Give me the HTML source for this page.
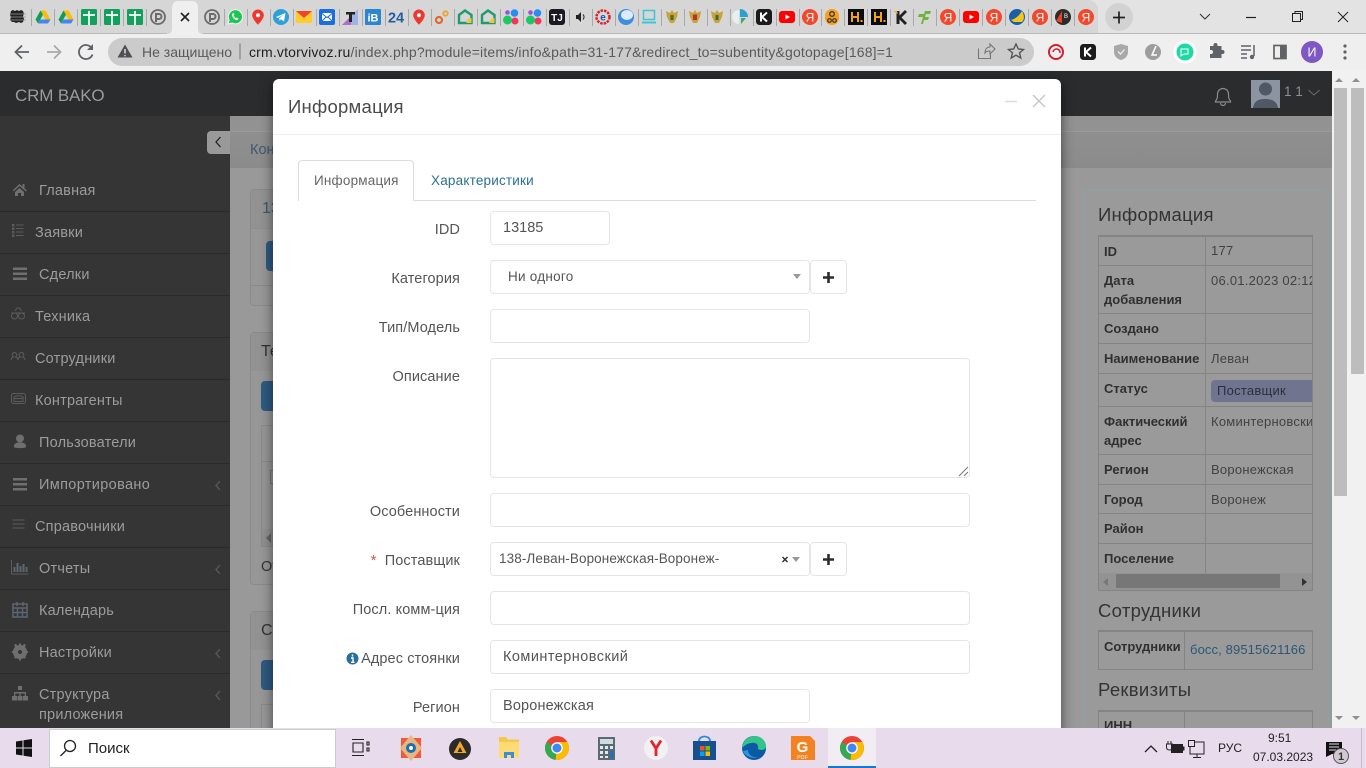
<!DOCTYPE html>
<html lang="ru"><head><meta charset="utf-8"><title>CRM BAKO</title>
<style>
html,body{margin:0;padding:0;width:1366px;height:768px;overflow:hidden;background:#999;font-family:"Liberation Sans","Noto Sans CJK SC",sans-serif}
div,span,a{position:absolute;box-sizing:border-box}
.t{white-space:nowrap;line-height:20px;height:20px}
.s{font-size:14.5px;color:#9c9c9c;letter-spacing:.2px;left:39px}
.s.n{left:35px}
.l{font-size:14.5px;color:#555;text-align:right;right:906px;letter-spacing:.1px}
.i{left:490px;height:34px;background:#fff;border:1px solid #e5e5e5;border-radius:4px;font-size:14.5px;color:#555;line-height:33px;padding-left:12px;letter-spacing:.25px;white-space:nowrap}
.p{left:810px;width:37px;height:34px;background:#fff;border:1px solid #e5e5e5;border-radius:4px}
.k{font-size:13px;font-weight:bold;color:#303030;left:5px;letter-spacing:0}
.v{font-size:13px;color:#424242;left:112px;letter-spacing:.25px}
.h{height:1px;left:0;width:215px;background:#848484}
.sep{left:0;width:230px;height:1px;background:#2b2b2b}
svg{position:absolute;display:block}
</style></head><body>

<svg width="0" height="0" style="position:absolute">
<defs>
<symbol id="drive" viewBox="0 0 16 16"><path d="M5.500 1.500h5L15.500 10.500h-5z" fill="#fbbc04"/><path d="M5.500 1.500L.5 10.500 3 14.500 8 5.800z" fill="#0f9d58"/><path d="M3 14.500h10l2.500-4H5.500z" fill="#4285f4"/></symbol>
<symbol id="sheet" viewBox="0 0 16 16"><rect width="16" height="16" rx="1.500" fill="#12a05c"/><path d="M2 6h12M8 2v14" stroke="#fff" stroke-width="1.700" fill="none"/></symbol>
<symbol id="pp" viewBox="0 0 16 16"><circle cx="8" cy="8" r="7" fill="none" stroke="#6b6b6b" stroke-width="1.800"/><path d="M6 13V5h3a2.300 2.300 0 010 5H6" fill="none" stroke="#6b6b6b" stroke-width="2"/></symbol>
<symbol id="wa" viewBox="0 0 16 16"><path d="M1 15l1.200-4A7 7 0 115 13.900z" fill="#1fc655" stroke="#fff" stroke-width=".8"/><path d="M5.500 4.500c-1.500 2 1.500 7 5 6.500l1-1.500-2-1-.8.800C7.500 8 7 7.300 6.700 6.300l.7-.8-.8-1.500z" fill="#fff"/></symbol>
<symbol id="pin" viewBox="0 0 16 16"><path d="M8 .5a5.800 5.800 0 00-5.800 5.800C2.200 10 8 15.800 8 15.800s5.800-5.800 5.800-9.500A5.800 5.800 0 008 .5z" fill="#f0372e"/><circle cx="8" cy="6.300" r="2" fill="#fff"/></symbol>
<symbol id="tg" viewBox="0 0 16 16"><circle cx="8" cy="8" r="8" fill="#2f9fd8"/><path d="M3 8l9.500-4-1.500 8.500-3-2.200-1.500 1.400-.3-2.500 4.300-3.700L5 9z" fill="#fff"/></symbol>
<symbol id="ym" viewBox="0 0 16 16"><rect y="2" width="16" height="12" fill="#ffcc2b"/><path d="M0 2l8 7 8-7z" fill="#f0442c"/></symbol>
<symbol id="bm" viewBox="0 0 16 16"><rect width="16" height="16" rx="2" fill="#1a6fe0"/><rect x="3" y="4" width="10" height="8" rx="2" fill="#fff"/><path d="M3.500 5L8 8.500 12.500 5M3.500 11.500L7 8M12.500 11.500L9 8" stroke="#1a6fe0" fill="none"/></symbol>
<symbol id="tt" viewBox="0 0 16 16"><path d="M0 16L16 0v16z" fill="#9fb4e2"/><path d="M0 16L9 7v9z" fill="#b06cc8"/><path d="M4 3h9v2.500H10V13H7V5.500H4z" fill="#222"/></symbol>
<symbol id="ib" viewBox="0 0 16 16"><rect width="16" height="16" rx="1" fill="#2a86cf"/><text x="8" y="12.500" font-size="11" fill="#fff" font-weight="bold" text-anchor="middle" font-family="Liberation Sans">iB</text></symbol>
<symbol id="n24" viewBox="0 0 16 16"><text x="8" y="13.500" font-size="14.500" fill="#215f9c" font-weight="bold" text-anchor="middle" font-family="Liberation Sans">24</text></symbol>
<symbol id="gear" viewBox="0 0 16 16"><circle cx="5" cy="11" r="3" fill="none" stroke="#e0682a" stroke-width="2.200"/><circle cx="11.500" cy="4.500" r="2.200" fill="none" stroke="#f2a12c" stroke-width="1.800"/></symbol>
<symbol id="hs" viewBox="0 0 16 16"><path d="M8 1.500L14.500 6v8H2V6z" fill="none" stroke="#1f9a6f" stroke-width="2.400"/><path d="M11 10l3.500-1v5H9z" fill="#f5c33b"/></symbol>
<symbol id="dots" viewBox="0 0 16 16"><circle cx="4.500" cy="11" r="4.500" fill="#18c964"/><circle cx="11.500" cy="4" r="3.800" fill="#2a8bf2"/><circle cx="12" cy="12" r="3.500" fill="#f2355b"/><circle cx="4.500" cy="3.500" r="2.300" fill="#9b51e0"/></symbol>
<symbol id="ti" viewBox="0 0 16 16"><rect width="16" height="16" rx="3" fill="#1a1a22"/><text x="8" y="12" font-size="10" fill="#fff" font-weight="bold" text-anchor="middle" font-family="Liberation Sans">TJ</text></symbol>
<symbol id="spk" viewBox="0 0 16 16"><path d="M4 6h2l3-3v10L6 10H4z" fill="#222"/><path d="M11 5.500a3.500 3.500 0 010 5" stroke="#222" fill="none"/></symbol>
<symbol id="ee" viewBox="0 0 16 16"><circle cx="8" cy="8" r="6.500" fill="none" stroke="#d8232a" stroke-width="2.500" stroke-dasharray="2.500 1"/><text x="8" y="11.500" font-size="10" font-weight="bold" fill="#1b57b5" text-anchor="middle" font-family="Liberation Sans">e</text></symbol>
<symbol id="ball" viewBox="0 0 16 16"><circle cx="8" cy="8" r="8" fill="#3f8de0"/><ellipse cx="9" cy="6" rx="6" ry="5" fill="#dcecff"/></symbol>
<symbol id="mon" viewBox="0 0 16 16"><rect x="2.500" y="1.500" width="11" height="9" fill="none" stroke="#3cc5d8" stroke-width="1.500"/><path d="M1 13.500h14" stroke="#3cc5d8" stroke-width="2"/></symbol>
<symbol id="emb" viewBox="0 0 16 16"><path d="M8 1l2 3 4-2-1 6-3 6H6L3 8 2 2l4 2z" fill="#c9a33a"/><path d="M6.500 6h3v5h-3z" fill="#3a6a3a"/></symbol>
<symbol id="emr" viewBox="0 0 16 16"><path d="M8 1l2 3 4-2-1 6-3 6H6L3 8 2 2l4 2z" fill="#c9a33a"/><path d="M6 5.500h4v5.500H6z" fill="#b6322a"/></symbol>
<symbol id="pie" viewBox="0 0 16 16"><path d="M8 0a8 8 0 018 8H8z" fill="#2e9fd0"/><path d="M7 1v14A7 7 0 017 1z" fill="#e6f0f0"/><path d="M9 9h5l-5 6z" fill="#3fa96b"/></symbol>
<symbol id="kk" viewBox="0 0 16 16"><rect width="16" height="16" rx="3.500" fill="#1b1b1b"/><path d="M5 3.500v9M11 3.500L6 8l5 4.500" stroke="#fff" stroke-width="2" fill="none"/></symbol>
<symbol id="yt" viewBox="0 0 16 16"><rect y="2" width="16" height="12" rx="3" fill="#f00"/><path d="M6.500 5.500L11 8l-4.500 2.500z" fill="#fff"/></symbol>
<symbol id="ya" viewBox="0 0 16 16"><circle cx="8" cy="8" r="8" fill="#f4472b"/><text x="8" y="12.500" font-size="12" fill="#fff" text-anchor="middle" font-family="Liberation Sans">Я</text></symbol>
<symbol id="ok" viewBox="0 0 16 16"><rect x="1" width="14" height="16" rx="7" fill="#f7a01d"/><circle cx="8" cy="5" r="2.300" fill="none" stroke="#333" stroke-width="1.300"/><circle cx="5.500" cy="11.500" r="1.800" fill="none" stroke="#333" stroke-width="1.200"/><circle cx="10.500" cy="11.500" r="1.800" fill="none" stroke="#333" stroke-width="1.200"/></symbol>
<symbol id="hh" viewBox="0 0 16 16"><rect width="16" height="16" fill="#0c0c0c"/><path d="M4 3v10M10 3v10M4 8h6" stroke="#f2a11f" stroke-width="2"/><rect x="12.500" y="11" width="2" height="2" fill="#f2a11f"/></symbol>
<symbol id="kc" viewBox="0 0 16 16"><path d="M5 2v13" stroke="#222" stroke-width="3"/><path d="M13 2L6.500 8.500 13 15" stroke="#222" stroke-width="2.800" fill="none"/><path d="M0 2h4l1 3z" fill="#f2b01f"/></symbol>
<symbol id="ff" viewBox="0 0 16 16"><path d="M5 15l2-7H2l1-3h5l1-3h6l-1 3H10L9 8h4l-1 3H8l-1 4z" fill="#6fb23c"/></symbol>
<symbol id="ln" viewBox="0 0 16 16"><circle cx="8" cy="8" r="8" fill="#1b5faa"/><path d="M2 11c4-1 8-4 11-9 2 3 3 8 0 11H5z" fill="#f5c518"/></symbol>
<symbol id="ab" viewBox="0 0 16 16"><circle cx="8" cy="8" r="8" fill="#2c2c2c"/><path d="M1 12L7 2v12z" fill="#e6432c"/><text x="11" y="9" font-size="6" fill="#fff" text-anchor="middle" font-family="Liberation Sans">B</text></symbol>
<symbol id="cr" viewBox="0 0 24 24"><circle cx="12" cy="12" r="12" fill="#ea4335"/><path d="M12 12L1.600 6A12 12 0 000 12a12 12 0 0010.500 11.900z" fill="#34a853"/><path d="M12 6h10.400A12 12 0 0124 12a12 12 0 01-13.500 11.900L12 12z" fill="#fbbc04"/><circle cx="12" cy="12" r="5.800" fill="#fff"/><circle cx="12" cy="12" r="4.500" fill="#4285f4"/></symbol>
</defs>
</svg>

<!-- tab strip -->
<div style="left:0;top:0;width:1366px;height:35px;background:#e3e3e3"></div>
<div style="left:0;top:0;width:1098px;height:34px;background:#d6d6d6;border-radius:0 10px 0 0"></div>
<svg style="left:0;top:0" width="1366" height="35">
<g stroke="#a9a9a9" stroke-width="1">
<path d="M31.500 9v17M54.500 9v17M77.500 9v17M100.500 9v17M123.500 9v17M146.500 9v17M224.500 9v17M247.500 9v17M270.500 9v17M293.500 9v17M316.500 9v17M339.500 9v17M362.500 9v17M385.500 9v17M408.500 9v17M431.500 9v17M454.500 9v17M477.500 9v17M500.500 9v17M523.500 9v17M546.500 9v17M569.500 9v17M592.500 9v17M615.500 9v17M638.500 9v17M661.500 9v17M684.500 9v17M707.500 9v17M730.500 9v17M753.500 9v17M776.500 9v17M799.500 9v17M821.500 9v17M844.500 9v17M867.500 9v17M890.500 9v17M913.500 9v17M936.500 9v17M959.500 9v17M982.500 9v17M1005.500 9v17M1028.500 9v17M1051.500 9v17M1074.500 9v17"/>
</g>
<path d="M11 11l2-1 2 1 2-1 2 1 2-1 2 1 1 3-1 2 1 3-1 3-2 1-2-1-3 1-2-1-2 0-2-2 1-3-1-2z" fill="#222"/>
<path d="M10 14h16M10 17h16M10 20h16" stroke="#999" stroke-width=".7"/>
<use href="#drive" x="35" y="9" width="16" height="16"/><use href="#drive" x="58" y="9" width="16" height="16"/>
<use href="#sheet" x="81" y="9" width="16" height="16"/><use href="#sheet" x="104" y="9" width="16" height="16"/><use href="#sheet" x="127" y="9" width="16" height="16"/>
<use href="#pp" x="150" y="9" width="16" height="16"/>
<path d="M167 34c4 0 5-2 5-6V8c0-4 2-7 6-7h14c4 0 6 3 6 7v20c0 4 1 6 5 6z" fill="#efefef"/>
<path d="M181 13l8 8M189 13l-8 8" stroke="#222" stroke-width="1.600"/>
<use href="#pp" x="204" y="9" width="16" height="16"/><use href="#wa" x="227" y="9" width="16" height="16"/><use href="#pin" x="250" y="9" width="16" height="16"/><use href="#tg" x="273" y="9" width="16" height="16"/><use href="#ym" x="296" y="9" width="16" height="16"/><use href="#bm" x="319" y="9" width="16" height="16"/><use href="#tt" x="342" y="9" width="16" height="16"/><use href="#ib" x="365" y="9" width="16" height="16"/><use href="#n24" x="388" y="9" width="16" height="16"/><use href="#pin" x="411" y="9" width="16" height="16"/><use href="#gear" x="434" y="9" width="16" height="16"/><use href="#hs" x="457" y="9" width="16" height="16"/><use href="#hs" x="480" y="9" width="16" height="16"/><use href="#dots" x="503" y="9" width="16" height="16"/><use href="#dots" x="526" y="9" width="16" height="16"/><use href="#ti" x="549" y="9" width="16" height="16"/><use href="#spk" x="572" y="9" width="16" height="16"/><use href="#ee" x="595" y="9" width="16" height="16"/><use href="#ball" x="618" y="9" width="16" height="16"/><use href="#mon" x="641" y="9" width="16" height="16"/><use href="#emb" x="664" y="9" width="16" height="16"/><use href="#emr" x="687" y="9" width="16" height="16"/><use href="#emb" x="709" y="9" width="16" height="16"/><use href="#pie" x="732" y="9" width="16" height="16"/><use href="#kk" x="756" y="9" width="16" height="16"/><use href="#yt" x="779" y="9" width="16" height="16"/><use href="#ya" x="802" y="9" width="16" height="16"/><use href="#ok" x="824" y="9" width="16" height="16"/><use href="#hh" x="848" y="9" width="16" height="16"/><use href="#hh" x="871" y="9" width="16" height="16"/><use href="#kc" x="893" y="9" width="16" height="16"/><use href="#ff" x="916" y="9" width="16" height="16"/><use href="#ya" x="940" y="9" width="16" height="16"/><use href="#yt" x="963" y="9" width="16" height="16"/><use href="#ya" x="986" y="9" width="16" height="16"/><use href="#ln" x="1009" y="9" width="16" height="16"/><use href="#ya" x="1032" y="9" width="16" height="16"/><use href="#ab" x="1055" y="9" width="16" height="16"/><use href="#ya" x="1078" y="9" width="16" height="16"/>
<circle cx="1119" cy="17" r="14" fill="#d2d2d2"/>
<path d="M1113 17.500h12M1119 11.500v12" stroke="#222" stroke-width="1.700"/>
<path d="M1200 14l5 5 5-5" fill="none" stroke="#333"/>
<path d="M1246 17.500h10" stroke="#222" stroke-width="1.200"/>
<path d="M1292.500 13.500h8v8h-8zM1295 13.500v-2h7.500v8h-2" fill="none" stroke="#222"/>
<path d="M1338 12l10 10M1348 12l-10 10" stroke="#222"/>
</svg>

<!-- toolbar -->
<div style="left:0;top:34px;width:1366px;height:37px;background:#efefef"></div>
<div style="left:0;top:33px;width:167px;height:1px;background:#b9b9b9"></div>
<div style="left:203px;top:33px;width:1163px;height:1px;background:#b9b9b9"></div>
<div style="left:108px;top:38px;width:926px;height:28px;background:#cbcbcb;border-radius:14px"></div>
<svg style="left:0;top:34px" width="1366" height="37">
<g fill="none" stroke="#5f6368" stroke-width="1.800">
<path d="M29 18H16M22 11.500L15.500 18l6.500 6.500"/>
<path d="M47 18h13M54 11.500l6.500 6.500-6.500 6.500" stroke="#a9a9a9"/>
<path d="M92 14.500a7 7 0 10.500 6"/>
</g>
<path d="M93 10v6h-6z" fill="#5f6368"/>
<path d="M125 10.500l7.500 13h-15z" fill="#4d4f53"/><path d="M125 15v4.500M125 21v1.200" stroke="#fff" stroke-width="1.200"/>
<path d="M240 9.500v16" stroke="#777"/>
<g fill="none" stroke="#777" stroke-width="1.100">
<path d="M978.500 14.500v10h12v-4M985 19c0-4 2-6 5-6v-3l5 5-5 5v-3c-2 0-4 .5-5 2z"/>
<path d="M1016 10l2.300 5 5.200.5-4 3.400 1.300 5.100-4.800-2.800-4.800 2.800 1.300-5.100-4-3.400 5.200-.5z" stroke="#555" stroke-width="1.400"/>
</g>
<circle cx="1056" cy="18" r="7" fill="none" stroke="#d2202f" stroke-width="2"/><path d="M1053 18a3.500 3.500 0 117 1" fill="none" stroke="#d2202f" stroke-width="1.500"/>
<use href="#kk" x="1080" y="10" width="16" height="16"/>
<path d="M1121 10l7 2v6c0 4-3 7-7 8-4-1-7-4-7-8v-6z" fill="#a8a8a8"/><path d="M1118 17.500l2.500 2.500 4-4.500" stroke="#eee" fill="none" stroke-width="1.300"/>
<circle cx="1153" cy="18" r="8" fill="#9d9d9d"/><path d="M1156 12l-4 9h5" stroke="#fff" stroke-width="1.500" fill="none"/>
<circle cx="1185" cy="18" r="11.500" fill="#fff"/><circle cx="1185" cy="18" r="8.500" fill="#1fd9a5"/><path d="M1181 15h7v5h-4l-3 2z" fill="none" stroke="#fff"/>
<path d="M1210 13h3.500v-1a2 2 0 014 0v1h4v4h1a2 2 0 010 4h-1v4h-11.500v-4h1a2 2 0 000-4h-1z" fill="#5f6368" transform="translate(0,-1)"/>
<path d="M1241 12h10M1241 16h10M1241 20h6M1241 24h6" stroke="#5f6368" stroke-width="1.500"/><path d="M1254 11v11" stroke="#5f6368" stroke-width="1.500"/><circle cx="1252" cy="23" r="2.200" fill="#5f6368"/>
<rect x="1274" y="11.500" width="12" height="13" fill="none" stroke="#5f6368" stroke-width="1.700"/><rect x="1280" y="11.500" width="6" height="13" fill="#5f6368"/>
<circle cx="1312" cy="18" r="11" fill="#7e57c2"/>
<text x="1312" y="22.500" font-size="12.500" fill="#fff" text-anchor="middle" font-family="Liberation Sans">И</text>
<circle cx="1345" cy="12" r="1.600" fill="#5f6368"/><circle cx="1345" cy="18" r="1.600" fill="#5f6368"/><circle cx="1345" cy="24" r="1.600" fill="#5f6368"/>
</svg>
<span class="t" style="left:142px;top:42px;font-size:14px;color:#5a5a5a;letter-spacing:0">Не защищено</span>
<span class="t" style="left:249px;top:42px;font-size:14px;color:#5a5a5a;letter-spacing:.17px"><span style="position:static;color:#222">crm.vtorvivoz.ru</span>/index.php?module=items/info&amp;path=31-177&amp;redirect_to=subentity&amp;gotopage[168]=1</span>

<!-- app page -->
<div style="left:0;top:71px;width:1332px;height:45px;background:#2b2c2e"></div>
<span class="t" style="left:15px;top:86px;font-size:17px;color:#9b9b9b;letter-spacing:-.15px">CRM BAKO</span>
<div style="left:0;top:116px;width:230px;height:612px;background:#353536"></div>
<div style="left:230px;top:116px;width:1102px;height:15px;background:#929292"></div>
<div style="left:230px;top:131px;width:1102px;height:37px;background:linear-gradient(#8f8f8f,#8b8b8b);border-top:1px solid #9a9a9a"></div>
<div style="left:230px;top:168px;width:1102px;height:560px;background:#999"></div>
<div style="left:207px;top:131px;width:23px;height:23px;background:#999;border-radius:4px 0 0 4px"></div>
<svg style="left:207px;top:131px" width="23" height="23"><path d="M13.500 6l-4.500 5 4.500 5" fill="none" stroke="#222" stroke-width="1.300"/></svg>
<span class="t" style="left:250px;top:140px;font-size:14.5px;color:#3f5a70">Кон</span>

<div class="sep" style="top:211px"></div><div class="sep" style="top:253px"></div><div class="sep" style="top:295px"></div><div class="sep" style="top:337px"></div><div class="sep" style="top:379px"></div><div class="sep" style="top:421px"></div><div class="sep" style="top:463px"></div><div class="sep" style="top:505px"></div><div class="sep" style="top:547px"></div><div class="sep" style="top:589px"></div><div class="sep" style="top:631px"></div><div class="sep" style="top:673px"></div>
<span class="t s" style="top:181px">Главная</span>
<span class="t s n" style="top:223px">Заявки</span>
<span class="t s" style="top:265px">Сделки</span>
<span class="t s n" style="top:307px">Техника</span>
<span class="t s n" style="top:349px">Сотрудники</span>
<span class="t s n" style="top:391px">Контрагенты</span>
<span class="t s" style="top:433px">Пользователи</span>
<span class="t s" style="top:475px;letter-spacing:.35px">Импортировано</span>
<span class="t s n" style="top:517px">Справочники</span>
<span class="t s" style="top:559px">Отчеты</span>
<span class="t s" style="top:601px">Календарь</span>
<span class="t s" style="top:643px">Настройки</span>
<span class="t s" style="top:685px">Структура</span>
<span class="t s" style="top:705px">приложения</span>
<svg style="left:0;top:116px" width="230" height="612">
<g fill="#6f6f6f">
<path d="M13 74l6.500-6 3 2.700V68h2v4.500l2.500 2-1 1-6.500-5.500-6 5.500zM15 76l4.500-4 4.500 4v4h-3v-3h-3v3h-3z"/>
<path d="M13 151.500h14v2.500H13zM13 156.500h14v2.500H13zM13 161.500h14v2.500H13zM13 362h14v2.500H13zM13 367h14v2.500H13zM13 372h14v2.500H13z"/>
<circle cx="20" cy="322.500" r="4"/><path d="M14 331c-.5-4 3-4.500 6-4.500s6.500.5 6 4.500c0 1.500-12 1.500-12 0z"/>
<g transform="translate(0,2)">
<path d="M13 534a7 7 0 0014 0 7 7 0 00-14 0zm5 0a2 2 0 104 0 2 2 0 00-4 0z" fill-rule="evenodd"/>
<path d="M19 525.500h2v2.500h-2zM19 540h2v2.500h-2zM12 533h2.500v2H12zM25.500 533H28v2h-2.500zM14 527.500l1.700-1.700 1.800 1.800-1.700 1.700zM22.500 539l1.700-1.700 1.800 1.800-1.700 1.700zM26 527.500l-1.700-1.700-1.800 1.800 1.700 1.700zM17.500 539l-1.700-1.700-1.800 1.800 1.700 1.700z"/>
</g>
<path d="M18 570h4v4h-4zM12 580h5v4.500h-5zM17.500 580h5v4.500h-5zM23 580h5v4.500h-5zM14 576h12v1.500H14zM14 577h1.300v3H14zM19.300 577h1.300v3h-1.300zM24.700 577h1.300v3h-1.300z"/>
</g>
<g fill="none" stroke="#5c5c5c" stroke-width="1">
<path d="M12.500 108.500h1.500v1.500h-1.500zM12.500 112h1.500v1.500h-1.500zM12.500 115.500h1.500v1.500h-1.500zM12.500 119h1.500v1.500h-1.500zM16 109h7.500M16 112.500h7.500M16 116h7.500M16 119.500h7.500"/>
<circle cx="14.500" cy="200" r="3"/><circle cx="21.500" cy="200" r="3"/><path d="M11 197h14M15 195l2-3h2.500l2 3"/>
<path d="M11.500 244c0-2 1.500-3 2.500-3-2.500-1.500-1-4.500 1-4.500s3.500 3 1 4.500c1 0 2.500 1 2.500 3M18.500 244c0-2 1.500-3 2.500-3-2.500-1.500-1-4.500 1-4.500s3.500 3 1 4.500c1 0 2.500 1 2.500 3" transform="translate(-.5,0)"/>
<rect x="11.500" y="277.500" width="14" height="10" rx="2"/><path d="M13.500 282c1-3 9-3 10 0M14 282.500h9v3h-9z"/>
<path d="M12.500 404h12M12.500 408h12M12.500 412h12" stroke-width="1.300" stroke="#565656"/>
<path d="M11.500 444v14h17"/><path d="M14.500 456v-5M17.500 456v-9M20.500 456v-6M23.500 456v-8M26.500 456v-5" stroke-width="2" stroke="#5c6670"/>
</g>
<g fill="none" stroke="#5c6670" stroke-width="1.500"><rect x="13" y="488" width="14" height="13"/><path d="M13 492h14M17.500 492v9M22.500 492v9M13 496.500h14M17 486v4M23 486v4"/></g>
<g fill="none" stroke="#5a5a5a" stroke-width="1.300"><path d="M220 365l-4 4.500 4 4.500M220 449l-4 4.500 4 4.500M220 533l-4 4.500 4 4.500M220 575l-4 4.500 4 4.500"/></g>
</svg>

<!-- left panels behind modal -->
<div style="left:250px;top:189px;width:60px;height:117px;border:1px solid #8a8a8a;border-radius:4px;background:#979797"></div>
<div style="left:251px;top:190px;width:40px;height:39px;background:#929292;border-bottom:1px solid #8e8e8e"></div>
<span class="t" style="left:262px;top:199px;font-size:16px;color:#3f5a70">13</span>
<div style="left:266px;top:241px;width:30px;height:30px;background:#2f5a80;border-radius:4px"></div>
<div style="left:251px;top:285px;width:40px;height:1px;background:#8a8a8a"></div>
<div style="left:250px;top:332px;width:60px;height:253px;border:1px solid #8a8a8a;border-radius:4px;background:#979797"></div>
<div style="left:251px;top:333px;width:40px;height:38px;background:#929292"></div>
<span class="t" style="left:261px;top:342px;font-size:16px;color:#333">Те</span>
<div style="left:261px;top:381px;width:30px;height:30px;background:#2f5a80;border-radius:4px"></div>
<div style="left:261px;top:425px;width:40px;height:122px;border:1px solid #8a8a8a;background:#969696"></div>
<div style="left:262px;top:426px;width:12px;height:36px;border-bottom:1px solid #8a8a8a"></div>
<div style="left:270px;top:470px;width:8px;height:14px;border:1px solid #777"></div>
<div style="left:262px;top:529px;width:40px;height:17px;background:#909090"></div>
<svg style="left:264px;top:532px" width="10" height="12"><path d="M7 1L2 6l5 5z" fill="#666"/></svg>
<span class="t" style="left:261px;top:557px;font-size:14.5px;color:#333">От</span>
<div style="left:250px;top:611px;width:60px;height:140px;border:1px solid #8a8a8a;border-radius:4px;background:#979797"></div>
<div style="left:251px;top:612px;width:40px;height:38px;background:#929292"></div>
<span class="t" style="left:261px;top:621px;font-size:16px;color:#333">Со</span>
<div style="left:261px;top:660px;width:30px;height:30px;background:#2f5a80;border-radius:4px"></div>
<div style="left:261px;top:704px;width:40px;height:40px;border:1px solid #8a8a8a"></div>

<!-- right panel -->
<div style="left:1082px;top:189px;width:247px;height:560px;border:1px solid #86a4aa;border-radius:4px;background:#9a9a9a"></div>
<span class="t" style="left:1098px;top:205px;font-size:18.500px;color:#333;letter-spacing:.25px">Информация</span>
<div style="left:1098px;top:235px;width:215px;height:356px;border:1px solid #848484;border-top-width:2px;overflow:hidden">
 <div class="h" style="top:28px"></div><div class="h" style="top:76px"></div><div class="h" style="top:106px"></div><div class="h" style="top:136px"></div><div class="h" style="top:169px"></div><div class="h" style="top:217px"></div><div class="h" style="top:247px"></div><div class="h" style="top:276px"></div><div class="h" style="top:306px"></div>
 <div style="left:106px;top:0;width:1px;height:336px;background:#848484"></div>
 <span class="t k" style="top:5px">ID</span><span class="t v" style="top:4px">177</span>
 <span class="t k" style="top:34px">Дата</span><span class="t k" style="top:53px">добавления</span><span class="t v" style="top:34px">06.01.2023 02:12</span>
 <span class="t k" style="top:82px">Создано</span>
 <span class="t k" style="top:112px">Наименование</span><span class="t v" style="top:112px">Леван</span>
 <span class="t k" style="top:142px">Статус</span>
 <div style="left:112px;top:143px;width:110px;height:22px;background:#70748f;border-radius:4px"></div><span class="t v" style="left:118px;top:144px;color:#2e2e3e">Поставщик</span>
 <span class="t k" style="top:175px">Фактический</span><span class="t k" style="top:194px">адрес</span><span class="t v" style="top:175px">Коминтерновский</span>
 <span class="t k" style="top:223px">Регион</span><span class="t v" style="top:223px">Воронежская</span>
 <span class="t k" style="top:253px">Город</span><span class="t v" style="top:253px">Воронеж</span>
 <span class="t k" style="top:282px">Район</span>
 <span class="t k" style="top:312px">Поселение</span>
 <div style="left:0;top:336px;width:215px;height:18px;background:#939393"></div>
 <div style="left:17px;top:337px;width:164px;height:14px;background:#777"></div>
</div>
<svg style="left:1100px;top:573px" width="212" height="18"><path d="M8 5L3 9l5 4z" fill="#777"/><path d="M202 5l5 4-5 4z" fill="#333"/></svg>
<span class="t" style="left:1098px;top:601px;font-size:18.500px;color:#333;letter-spacing:.3px">Сотрудники</span>
<div style="left:1098px;top:630px;width:215px;height:40px;border:1px solid #848484;border-top-width:2px"></div>
<div style="left:1184px;top:631px;width:1px;height:38px;background:#848484"></div>
<span class="t" style="left:1104px;top:637px;font-size:13px;font-weight:bold;color:#303030">Сотрудники</span>
<span class="t" style="left:1190px;top:640px;font-size:13px;color:#2c5674;letter-spacing:.12px">босс, 89515621166</span>
<span class="t" style="left:1098px;top:680px;font-size:18.500px;color:#333;letter-spacing:.3px">Реквизиты</span>
<div style="left:1098px;top:710px;width:215px;height:40px;border:1px solid #848484;border-top-width:2px"></div>
<div style="left:1184px;top:711px;width:1px;height:38px;background:#848484"></div>
<span class="t" style="left:1104px;top:716px;font-size:13px;font-weight:bold;color:#303030">ИНН</span>

<!-- header right -->
<svg style="left:1210px;top:80px" width="110" height="36">
<path d="M6 20v-1c2-2 2-4 2-7a5.500 5.500 0 0111 0c0 3 0 5 2 7v1zM11 21a2.500 2.500 0 005 0" fill="none" stroke="#8b8b8b" stroke-width="1.200" transform="translate(-.5,2)"/>
<rect x="41" y="-1" width="29" height="29" fill="#8b94a0"/>
<circle cx="55.500" cy="9" r="6.500" fill="#4f5966"/><path d="M43 28c1-8 7-9 12-9s12 1 13 9z" fill="#4f5966"/>
<path d="M99 12l5.500 5 5.500-5" fill="none" stroke="#6b6b6b" transform="translate(-.5,-2)"/>
</svg>
<span class="t" style="left:1284px;top:82px;font-size:13.5px;color:#8e8e8e;letter-spacing:0">1 1</span>

<!-- scrollbars -->
<div style="left:1332px;top:71px;width:34px;height:657px;background:#f1f1f1"></div>
<div style="left:1334px;top:88px;width:13px;height:408px;background:#bdbdbd"></div>
<div style="left:1351px;top:88px;width:13px;height:286px;background:#bdbdbd"></div>
<svg style="left:1332px;top:71px" width="34" height="657"><path d="M3 11l4-4 4 4zM20 11l4-4 4 4zM3 645l4 4 4-4zM20 645l4 4 4-4z" fill="#8f8f8f"/></svg>

<!-- modal -->
<div style="left:273px;top:79px;width:788px;height:660px;background:#fff;border-radius:6px 6px 0 0;box-shadow:0 3px 12px rgba(0,0,0,.55)"></div>
<span class="t" style="left:288px;top:97px;font-size:18.500px;color:#4a4a4a;letter-spacing:.25px">Информация</span>
<div style="left:273px;top:134px;width:788px;height:1px;background:#efefef"></div>
<svg style="left:1000px;top:90px" width="52" height="22"><path d="M5 11.500h12" stroke="#dcdcdc" stroke-width="1.500"/><path d="M33 5l12 12M45 5L33 17" stroke="#c9c9c9" stroke-width="1.500"/></svg>
<div style="left:298px;top:200px;width:738px;height:1px;background:#ddd"></div>
<div style="left:298px;top:160px;width:116px;height:41px;background:#fff;border:1px solid #ddd;border-bottom:0;border-radius:4px 4px 0 0"></div>
<span class="t" style="left:314px;top:171px;font-size:13.500px;color:#666;letter-spacing:.2px">Информация</span>
<span class="t" style="left:431px;top:171px;font-size:13.500px;color:#2a6f97;letter-spacing:.2px">Характеристики</span>

<span class="t l" style="top:220px">IDD</span>
<div class="i" style="top:211px;width:120px;letter-spacing:0">13185</div>
<span class="t l" style="top:269px">Категория</span>
<div class="i" style="top:260px;width:320px;font-size:13.500px;padding-left:17px;line-height:32px">Ни одного</div>
<svg style="left:792px;top:273px" width="10" height="8"><path d="M1 1h8L5 6z" fill="#999"/></svg>
<div class="p" style="top:260px"></div>
<svg style="left:822px;top:271px" width="13" height="13"><path d="M6.500 1v11M1 6.500h11" stroke="#2c2c2c" stroke-width="2.600"/></svg>
<span class="t l" style="top:318px">Тип/Модель</span>
<div class="i" style="top:309px;width:320px"></div>
<span class="t l" style="top:367px">Описание</span>
<div class="i" style="top:358px;width:480px;height:120px"></div>
<svg style="left:958px;top:466px" width="11" height="11"><path d="M1 10l9-9M6 10l4-4" stroke="#777"/></svg>
<span class="t l" style="top:502px">Особенности</span>
<div class="i" style="top:493px;width:480px"></div>
<span class="t l" style="top:551px"><span style="position:static;color:#d9534f">*</span>&nbsp; Поставщик</span>
<div class="i" style="top:542px;width:320px;font-size:13.500px;padding-left:8px;letter-spacing:.1px;line-height:31px">138-Леван-Воронежская-Воронеж-</div>
<svg style="left:780px;top:554px" width="22" height="12"><path d="M2.500 3l5 5M7.500 3l-5 5" stroke="#333" stroke-width="1.500"/><path d="M12 3h8l-4 5z" fill="#999"/></svg>
<div class="p" style="top:542px"></div>
<svg style="left:822px;top:553px" width="13" height="13"><path d="M6.500 1v11M1 6.500h11" stroke="#2c2c2c" stroke-width="2.600"/></svg>
<span class="t l" style="top:600px">Посл. комм-ция</span>
<div class="i" style="top:591px;width:480px"></div>
<span class="t l" style="top:649px">Адрес стоянки</span>
<svg style="left:346px;top:652px" width="13" height="13"><circle cx="6.500" cy="6.500" r="6" fill="#2a6f97"/><path d="M6.500 2.500v2M5 6h2v4M5 10.300h3.500" stroke="#fff" stroke-width="1.400" fill="none"/></svg>
<div class="i" style="top:640px;width:480px;letter-spacing:.45px">Коминтерновский</div>
<span class="t l" style="top:698px">Регион</span>
<div class="i" style="top:689px;width:320px;letter-spacing:.15px">Воронежская</div>

<!-- taskbar -->
<div style="left:0;top:728px;width:1366px;height:40px;background:#e8dcec"></div>
<div style="left:49px;top:729px;width:287px;height:39px;background:#fff;border:1px solid #ccc"></div>
<div style="left:828px;top:728px;width:48px;height:40px;background:#f2ecf4"></div>
<div style="left:828px;top:766px;width:48px;height:2px;background:#1976d2"></div>
<svg style="left:0;top:728px" width="1366" height="40">
<path d="M16 13.500l6.500-1v7H16zM23.500 12.300l8.500-1.300v8.500h-8.500zM16 20.500h6.500v7l-6.500-1zM23.500 20.500H32V29l-8.500-1.300z" fill="#111"/>
<circle cx="70" cy="18" r="5.500" fill="none" stroke="#222" stroke-width="1.300"/><path d="M66 22.500l-5.500 5.500" stroke="#222" stroke-width="1.300"/>
<path d="M352 11.500h12M352 27.500h12M353 15h10v9h-10zM367 14h2v3h-2zM367 20h2v3h-2z" fill="none" stroke="#222" stroke-width="1.100"/>
<rect x="401" y="10" width="20" height="20" fill="#f05a3c"/><path d="M411 7l11 13-11 13-11-13z" fill="#e8b680"/><circle cx="411" cy="20" r="5" fill="#1b6fb5"/><circle cx="411" cy="20" r="2" fill="#fff"/>
<circle cx="460" cy="21" r="11" fill="#2b2b2b"/><path d="M460 13l6.500 12h-13z" fill="#f5a623"/><path d="M460 19l2.500 5h-5z" fill="#2b2b2b"/>
<path d="M499 9h7l2 2.500h11V30h-20z" fill="#f5c84c"/><rect x="499" y="14" width="20" height="16" fill="#ffdc73"/><path d="M504 30v-6h10v6h-3v-3h-4v3z" fill="#3a8dd8"/>
<use href="#cr" x="545" y="8" width="24" height="24"/>
<rect x="598" y="9" width="17" height="23" fill="#5a6a74"/><rect x="600" y="11" width="13" height="5" fill="#d0dbe0"/><path d="M600 18h3v3h-3zM605 18h3v3h-3zM610 18h3v3h-3zM600 23h3v3h-3zM605 23h3v3h-3zM600 28h3v2h-3zM605 28h3v2h-3z" fill="#e4e8ea"/><path d="M610 23h3v7h-3z" fill="#1e6fbf"/>
<circle cx="656" cy="20" r="12" fill="#f1f1f1"/><path d="M651 12.500l5 8 5-8M656 20.500V28" fill="none" stroke="#e5222b" stroke-width="2.800"/>
<path d="M693 13h23v19h-23z" fill="#184f8e"/><path d="M699 13c0-6 11-6 11 0" fill="none" stroke="#2a8ad4" stroke-width="1.800"/><path d="M700 18h4.500v4.500H700z" fill="#f25022"/><path d="M705.500 18h4.500v4.500h-4.500z" fill="#7fba00"/><path d="M700 23.500h4.500V28H700z" fill="#00a4ef"/><path d="M705.500 23.500h4.500V28h-4.500z" fill="#ffb900"/>
<circle cx="754" cy="20" r="12" fill="#0c59a4"/><path d="M742 20c1-8 7-12 13-12 6 0 11 5 11 10 0 4-5 5-8 3 1-4-2-7-6-6-4 0-7 2-10 5z" fill="#33c48a"/><path d="M748 22c0 5 5 8 10 7-5 2-13 0-15-6z" fill="#2b97e0"/>
<path d="M791 8h19l5 5v19h-24z" fill="#f58220"/><text x="802.500" y="24" font-size="15" fill="#fff" font-weight="bold" text-anchor="middle" font-family="Liberation Sans">G</text><text x="802.500" y="31" font-size="5.500" fill="#fff" text-anchor="middle" font-family="Liberation Sans">PDF</text>
<use href="#cr" x="840" y="8" width="24" height="24"/>
<path d="M1145 24l6-6 6 6" fill="none" stroke="#222" stroke-width="1.300"/>
<rect x="1171" y="16" width="12" height="9" fill="#222"/><rect x="1183" y="18.500" width="1.500" height="4" fill="#222"/><path d="M1168 13v3M1171 13v3M1166.500 16h6v3c0 2-1 3-3 3s-3-1-3-3z" fill="none" stroke="#222"/>
<path d="M1190 14h14v12h-14zM1197 26v3M1193 29.500h8" fill="none" stroke="#222"/><rect x="1188.500" y="12.500" width="6" height="6" fill="#e8dcec" stroke="#222"/>
<path d="M1326 15h16v12h-10l-6 3z" fill="#111" transform="translate(0,-1)"/><path d="M1329 17h10M1329 20h10M1329 23h7" stroke="#e8dcec" transform="translate(0,-1)"/>
<circle cx="1341" cy="28" r="7.500" fill="#d0c8d2" stroke="#555"/>
<text x="1341" y="32" font-size="11" font-weight="bold" fill="#333" text-anchor="middle" font-family="Liberation Sans">1</text>
<path d="M1361.500 0v40" stroke="#c6bcc9"/>
</svg>
<span class="t" style="left:88px;top:739px;font-size:15px;color:#222">Поиск</span>
<span class="t" style="left:1218px;top:738px;font-size:12px;color:#222">РУС</span>
<span class="t" style="left:1268px;top:728px;font-size:12px;color:#222">9:51</span>
<span class="t" style="left:1253px;top:747px;font-size:12px;color:#222">07.03.2023</span>
</body></html>
